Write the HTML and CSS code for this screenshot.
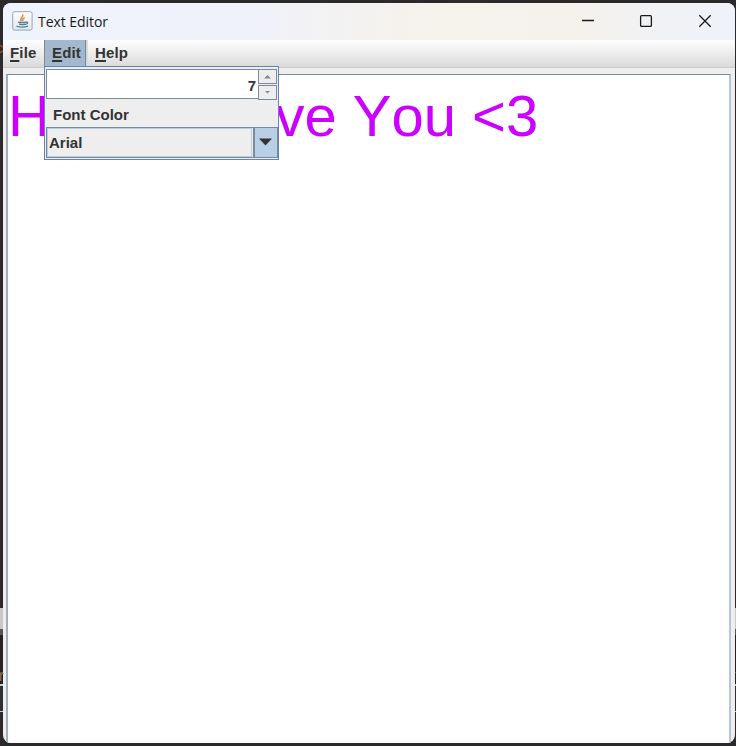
FILE: index.html
```html
<!DOCTYPE html>
<html lang="en">
<head>
<meta charset="utf-8">
<title>Text Editor</title>
<link rel="stylesheet" href="styles.css">
</head>
<body>
<div class="desktop">
  <span class="behind behind-c">c</span>
  <span class="behind behind-r">r</span>
  <div class="window">
    <header class="titlebar">
      <svg class="app-icon" width="21" height="20" viewBox="0 0 21 20">
        <defs><linearGradient id="tile" x1="0" y1="0" x2="0" y2="1"><stop offset="0" stop-color="#fff"/><stop offset="1" stop-color="#e3e8ec"/></linearGradient></defs>
        <rect x=".7" y=".7" width="19.4" height="18.4" rx="1.8" fill="url(#tile)" stroke="#8fa6b8"/>
        <path d="M9.500 10.400C6.500 7.700 12 6.300 10.700 3.200M11.300 10.300C9.700 8.900 11 7.700 12.800 6.500" fill="none" stroke="#ee8b3c" stroke-width="1.500"/>
        <path d="M6 11.200q4 1 8 0M7 13.200q3.500 1 6.500 0M4.500 15.200q5.500 2 11.500 0M14 11q2.500 0 1.300 1.500l-1.800 1" fill="none" stroke="#55819f" stroke-width="1.300"/>
      </svg>
      <span class="title">Text Editor</span>
      <div class="controls">
        <svg width="14" height="14" viewBox="0 0 14 14"><path d="M2 6.500H14"/></svg>
        <svg width="14" height="14" viewBox="0 0 14 14"><rect x="1.600" y="1.600" width="10.800" height="10.800" rx="1"/></svg>
        <svg width="14" height="14" viewBox="0 0 14 14"><path d="M1.300 1.300L12.700 12.700M12.700 1.300L1.300 12.700"/></svg>
      </div>
    </header>
    <nav class="menubar">
      <span class="menu file"><u>F</u>ile</span>
      <span class="menu edit"><u>E</u>dit</span>
      <span class="menu help"><u>H</u>elp</span>
    </nav>
    <main class="content">
      <div class="editor"><span>H</span><span class="tail">ve You &lt;3</span></div>
    </main>
  </div>
  <div class="popup">
    <div class="spinner">
      <span class="value">7</span>
      <div class="arrows">
        <span class="arrow"><svg width="7" height="4" viewBox="0 0 7 4"><path d="M0 3.500L3.500 0L7 3.500z"/></svg></span>
        <span class="arrow"><svg width="5" height="3" viewBox="0 0 5 3"><path d="M0 0H5L2.500 2.500z"/></svg></span>
      </div>
    </div>
    <div class="item">Font Color</div>
    <div class="combo">
      <span class="family">Arial</span>
      <span class="drop"><svg width="13" height="8" viewBox="0 0 13 8"><path d="M0 .5H13L6.500 7.500z"/></svg></span>
    </div>
  </div>
</div>
</body>
</html>
```
FILE: styles.css
```css
* { box-sizing: border-box; }
body { margin: 0; font-family: "Liberation Sans", Arial, sans-serif; }
svg { display: block; }
.desktop {
  position: relative;
  width: 736px;
  height: 746px;
  padding: 3px 1px 3px 3px;
  overflow: hidden;
  background: linear-gradient(#2b2929 0 608px, #c8c8c8 608px 629px, #555 629px 635px, #242222 635px 672px, #555 672px 673px, #242222 673px 684px, #ccc 684px 686px, #2b3033 686px 711px, #ccc 711px 712px, #2b2929 712px);
}
.behind { position: absolute; font-size: 14px; line-height: 16px; }
.behind-c { left: -4px; top: 40px; color: #b4561f; }
.behind-r { left: -1px; top: 668px; color: #8f7660; }
.window {
  display: flex;
  flex-direction: column;
  height: 740px;
  overflow: hidden;
  border-radius: 8px;
  background: #eee;
}
.titlebar {
  display: flex;
  align-items: center;
  flex: none;
  height: 37px;
  padding: 0 23px 1px 9px;
  background: linear-gradient(90deg, #eff3fc 0, #f0f2fa 32%, #f6f2ec 58%, #f5f2ed 78%, #f0f2f6 92%, #eff2f8);
}
.title {
  margin-left: 5px;
  font-family: "Open Sans", "Noto Sans", sans-serif;
  font-size: 14px;
  letter-spacing: -0.05px;
  color: #1a1a1a;
}
.controls { display: flex; gap: 45px; margin-left: auto; }
.controls svg { fill: none; stroke: #1a1a1a; stroke-width: 1.3; }
.menubar {
  display: flex;
  flex: none;
  height: 28px;
  border-bottom: 1px solid #ccc;
  background: linear-gradient(#fff, #dadada);
  font-weight: bold;
  font-size: 15px;
  line-height: 26px;
  letter-spacing: 0.15px;
  color: #333;
}
.menu u { text-decoration-thickness: 2px; text-underline-offset: 2px; text-decoration-skip-ink: none; }
.file { width: 41px; padding-left: 7px; }
.edit { width: 44px; padding-left: 8px; border-right: 1px solid #ddd; background: linear-gradient(90deg, #7a8a99 0 1px, #a3b8cc 1px 41px, #7a8a99 41px 42px, #c9d3de 42px); }
.help { padding-left: 7px; }
.content { flex: 1; padding: 6px 4px 0 3px; }
.editor {
  height: 100%;
  border: 1px solid;
  border-width: 1px 2px 0 2px;
  border-color: #7a8a99 #b8c5d2 #b8c5d2 #9fb0bf;
  background: #fff;
  font-size: 58px;
  line-height: 66px;
  padding-top: 8px;
  color: #c0f;
  white-space: nowrap;
  font-kerning: none;
}
.tail { margin-left: 225.5px; }
.popup {
  position: absolute;
  left: 44px;
  top: 66px;
  width: 235px;
  height: 94px;
  padding: 1px 0 1px 1px;
  border: 1px solid #6382bf;
  background: #eee;
  font-weight: bold;
  font-size: 15px;
  color: #333;
}
.spinner { display: flex; height: 32px; padding-top: 1px; }
.value {
  flex: 1;
  height: 30px;
  padding-right: 2px;
  border: 1px solid #7a8a99;
  border-right: 0;
  background: #fff;
  line-height: 31px;
  text-align: right;
}
.arrows { display: flex; flex-direction: column; width: 19px; height: 31px; gap: 1px; margin-right: 1px; }
.arrow { display: flex; flex: 1; align-items: center; justify-content: center; border: 1px solid #7a8a99; }
.arrow svg { fill: #7a8a99; }
.item { height: 27px; padding-left: 7px; line-height: 29px; }
.combo { display: flex; height: 31px; border: 1px solid #7a8a99; }
.family {
  flex: 1;
  padding-left: 1px;
  margin-right: 1px;
  border: 1px solid #b8cfe5;
  line-height: 27px;
}
.drop { display: flex; align-items: center; justify-content: center; width: 24px; padding: 0 2px 1px 0; border-left: 2px solid #7a8a99; background: #b8cfe5; }
.drop svg { fill: #333; }
```
